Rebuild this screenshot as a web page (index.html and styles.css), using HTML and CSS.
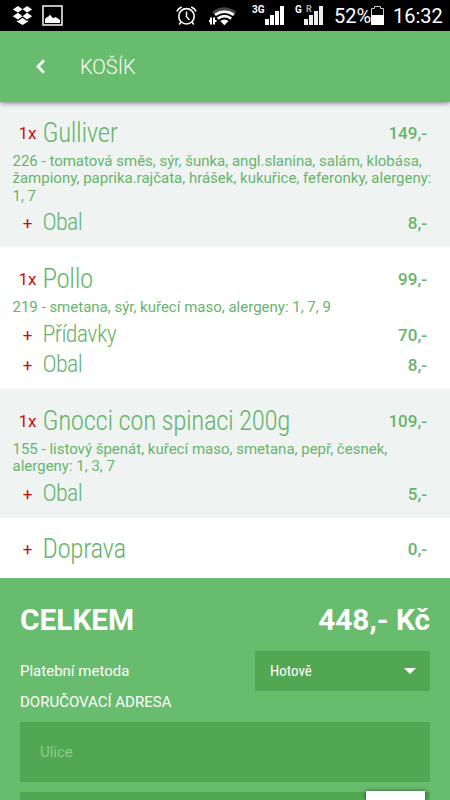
FILE: index.html
```html
<!DOCTYPE html>
<html lang="cs">
<head>
    <meta charset="UTF-8">
    <meta name="viewport" content="width=device-width, initial-scale=1.0">
    <title>Košík</title>
    <link rel="stylesheet" href="styles.css">
</head>
<body>
    <div class="status-bar">
        <svg class="icon-dropbox" width="21" height="19" viewBox="0 0 21 19">
            <path fill="#fff" d="M6 0l4.5 3.3L6 6.6.8 3.4zM15 0l5.2 3.4L15 6.6l-4.5-3.3zM6 6.8l4.5 3.5L6 13.6.8 10.2zM15 6.8l5.2 3.4-5.2 3.4-4.5-3.3zM10.5 11.8l4.4 3.2 1.3-.8v1.2l-5.7 3.5-5.7-3.5v-1.2l1.3.8z"/>
        </svg>
        <svg class="icon-image" width="21" height="21" viewBox="0 0 21 21">
            <rect x="1" y="1" width="19" height="19" fill="none" stroke="#ddd" stroke-width="1.7"/>
            <path fill="#fff" d="M3 18v-4l1.5-1.5 2-1 1.500-1.700 1.500 1.700 1.500 1.700 2.500-1.200 2 1.200 2.500 1.800v3z"/>
        </svg>
        <svg class="icon-alarm" width="21" height="20" viewBox="0 0 21 20" fill="none" stroke="#fff">
            <circle cx="10.5" cy="10.3" r="7.7" stroke-width="1.6"/>
            <path stroke-width="1.5" d="M10.5 5.5v5.3l3 3.2M1 5.5Q2 2.5 5.8 1M20 5.5Q19 2.5 15.2 1M5 16l-1.8 2.5M16 16l1.8 2.5"/>
        </svg>
        <svg class="icon-wifi" width="28" height="19" viewBox="0 0 28 19">
            <path fill="none" stroke="#444" stroke-width="3" d="M4 6Q15 -2.5 26.5 6"/>
            <path fill="none" stroke="#fff" stroke-width="2.7" d="M6 7.9Q15.5 1.5 24.8 7.9M8.7 11.6Q15.5 6.5 22.2 11.6"/>
            <path fill="#fff" d="M11.2 14Q15.5 11 19.6 14L15.4 18.3zM0 13h1v-2.500h2v7H1V15H0zM4 10.500h2V13h1.500v2H6v2.500H4z"/>
        </svg>
        <div class="signal signal-3g">
            <span class="network">3G</span>
            <svg width="19" height="19" viewBox="0 0 19 19" fill="#fff">
                <path d="M0 13h4v6H0zM5 9h4v10H5zM10 5h4v14h-4zM15 0h4v19h-4z"/>
            </svg>
        </div>
        <div class="signal signal-g">
            <span class="network">G</span>
            <svg width="19" height="19" viewBox="0 0 19 19" fill="#eee">
                <path d="M0 13h4v6H0zM5 9h4v10H5zM10 5h4v14h-4zM15 0h4v19h-4z"/>
            </svg>
            <span class="roaming">R</span>
        </div>
        <span class="percent">52%</span>
        <svg class="icon-battery" width="13" height="19" viewBox="0 0 13 19">
            <path fill="none" stroke="#ccc" d="M.5 18.5v-16H3.5V.5h6v2h3v16z"/>
            <path fill="#fff" d="M0 9h13v10H0z"/>
        </svg>
        <span class="clock">16:32</span>
    </div>

    <header class="header">
        <svg class="back" width="9" height="15" viewBox="0 0 9 15">
            <path fill="none" stroke="#fff" stroke-width="2.7" d="M8 1.2L2 7.5l6 6.3"/>
        </svg>
        <h1>KOŠÍK</h1>
    </header>

    <main>
        <section class="item">
            <div class="row">
                <span class="count">1x</span>
                <span class="name">Gulliver</span>
                <span class="price">149,-</span>
            </div>
            <p class="description">226 - tomatová směs, sýr, šunka, angl.slanina, salám, klobása, žampiony, paprika.rajčata, hrášek, kukuřice, feferonky, alergeny: 1, 7</p>
            <div class="row extra">
                <span class="count">+</span>
                <span class="name">Obal</span>
                <span class="price">8,-</span>
            </div>
        </section>

        <section class="item">
            <div class="row">
                <span class="count">1x</span>
                <span class="name">Pollo</span>
                <span class="price">99,-</span>
            </div>
            <p class="description">219 - smetana, sýr, kuřecí maso, alergeny: 1, 7, 9</p>
            <div class="row extra">
                <span class="count">+</span>
                <span class="name">Přídavky</span>
                <span class="price">70,-</span>
            </div>
            <div class="row extra">
                <span class="count">+</span>
                <span class="name">Obal</span>
                <span class="price">8,-</span>
            </div>
        </section>

        <section class="item">
            <div class="row">
                <span class="count">1x</span>
                <span class="name">Gnocci con spinaci 200g</span>
                <span class="price">109,-</span>
            </div>
            <p class="description">155 - listový špenát, kuřecí maso, smetana, pepř, česnek, alergeny: 1, 3, 7</p>
            <div class="row extra">
                <span class="count">+</span>
                <span class="name">Obal</span>
                <span class="price">5,-</span>
            </div>
        </section>

        <section class="item delivery">
            <div class="row">
                <span class="count">+</span>
                <span class="name">Doprava</span>
                <span class="price">0,-</span>
            </div>
        </section>
    </main>

    <section class="summary">
        <div class="total">
            <span>CELKEM</span>
            <span>448,- Kč</span>
        </div>
        <div class="payment">
            <span>Platební metoda</span>
            <div class="select">
                <span>Hotově</span>
                <span class="arrow"></span>
            </div>
        </div>
        <h2>DORUČOVACÍ ADRESA</h2>
        <input class="field" type="text" placeholder="Ulice">
        <div class="field next-field"></div>
    </section>
    <div class="floating-button"></div>
</body>
</html>
```
FILE: styles.css
```css
* {
    box-sizing: border-box;
}

body {
    display: flex;
    flex-direction: column;
    margin: 0;
    height: 100vh;
    overflow: hidden;
    position: relative;
    background-color: #68bc6e;
    font-family: Roboto, sans-serif;
}

.status-bar {
    display: flex;
    align-items: flex-start;
    flex-shrink: 0;
    height: 31px;
    padding-left: 12px;
    background-color: #000;
    color: #fff;
}

.icon-dropbox {
    margin-top: 6px;
}

.icon-image {
    margin: 5px 0 0 9px;
}

.icon-alarm {
    margin: 6px 0 0 113px;
}

.icon-wifi {
    margin: 7px 0 0 12px;
}

.signal {
    display: flex;
    position: relative;
    height: 31px;
}

.signal svg {
    margin-top: 6px;
}

.signal-3g {
    margin-left: 15px;
}

.signal-g {
    margin-left: 11px;
}

.network {
    width: 13px;
    padding-top: 4px;
    font-size: 10px;
    font-weight: 700;
    line-height: 12px;
}

.signal-g .network {
    width: 9px;
}

.roaming {
    position: absolute;
    left: 11px;
    top: 4px;
    font-size: 9px;
    font-weight: 700;
    line-height: 10px;
    color: #aaa;
}

.percent,
.clock {
    font-size: 20px;
    line-height: 32px;
}

.percent {
    width: 37px;
    margin-left: 11px;
}

.icon-battery {
    margin-top: 6px;
}

.clock {
    margin-left: 9px;
}

.header {
    display: flex;
    align-items: center;
    flex-shrink: 0;
    position: relative;
    height: 71px;
    padding-left: 36px;
    background-color: #68bc6e;
    box-shadow: 0 1px 5px rgba(0, 0, 0, 0.5);
    color: #fff;
}

.header h1 {
    margin: 0 0 0 35px;
    font-size: 20px;
    font-weight: 350;
}

.item {
    padding: 16px 12px 10px 12.5px;
    background-color: #fff;
    color: #68b36c;
}

.item:first-child {
    padding-top: 14.5px;
}

.item:nth-child(odd) {
    background-color: #eff4f3;
}

.row {
    display: flex;
    align-items: center;
    height: 32px;
    padding-right: 11px;
}

.row.extra {
    height: 30px;
}

.count {
    width: 30px;
    text-align: center;
    font-size: 17px;
    color: #cc0a0a;
}

.name {
    flex: 1;
    font-family: "Roboto Condensed", Roboto, sans-serif;
    font-stretch: 75%;
    font-size: 27px;
    font-weight: 300;
    letter-spacing: -0.38px;
}

.extra .name {
    font-size: 24px;
    letter-spacing: -0.65px;
}

.extra .count,
.extra .price {
    padding-top: 2px;
}

.price {
    font-size: 17px;
    font-weight: 500;
}

.description {
    margin: 4px 0 2px;
    font-size: 15px;
    line-height: 17.5px;
}

.delivery {
    padding-top: 15px;
    padding-bottom: 13px;
}

.summary {
    flex: 1;
    display: flex;
    flex-direction: column;
    min-height: 0;
    padding: 23px 20px 0;
    color: #fff;
}

.total {
    display: flex;
    justify-content: space-between;
    font-size: 29.8px;
    font-weight: 700;
    line-height: 38px;
}

.payment {
    display: flex;
    justify-content: space-between;
    align-items: center;
    margin-top: 12px;
    font-size: 15px;
}

.select {
    display: flex;
    justify-content: space-between;
    align-items: center;
    width: 175px;
    height: 40px;
    padding: 0 14px 0 15px;
    background-color: #52a753;
    font-family: "Roboto Condensed", Roboto, sans-serif;
    font-stretch: 75%;
}

.arrow {
    border: 6px solid transparent;
    border-top-color: #fff;
    border-bottom: 0;
}

.summary h2 {
    margin: 1px 0 9px;
    font-size: 15px;
    font-weight: 400;
    line-height: 21px;
}

.field {
    flex-shrink: 0;
    width: 100%;
    height: 60px;
    margin-bottom: 10px;
    padding: 0 20px;
    border: none;
    background-color: #52a753;
    font-family: Roboto, sans-serif;
    font-size: 15px;
    color: #fff;
}

.field::placeholder {
    color: #8ccb8e;
}

.next-field {
    flex: 1;
    height: auto;
    margin-bottom: 0;
    padding: 0;
}

.floating-button {
    position: absolute;
    right: 25px;
    bottom: 0;
    width: 59px;
    height: 9px;
    background-color: #fff;
    box-shadow: 0 0 4px rgba(0, 0, 0, 0.6);
}
```
